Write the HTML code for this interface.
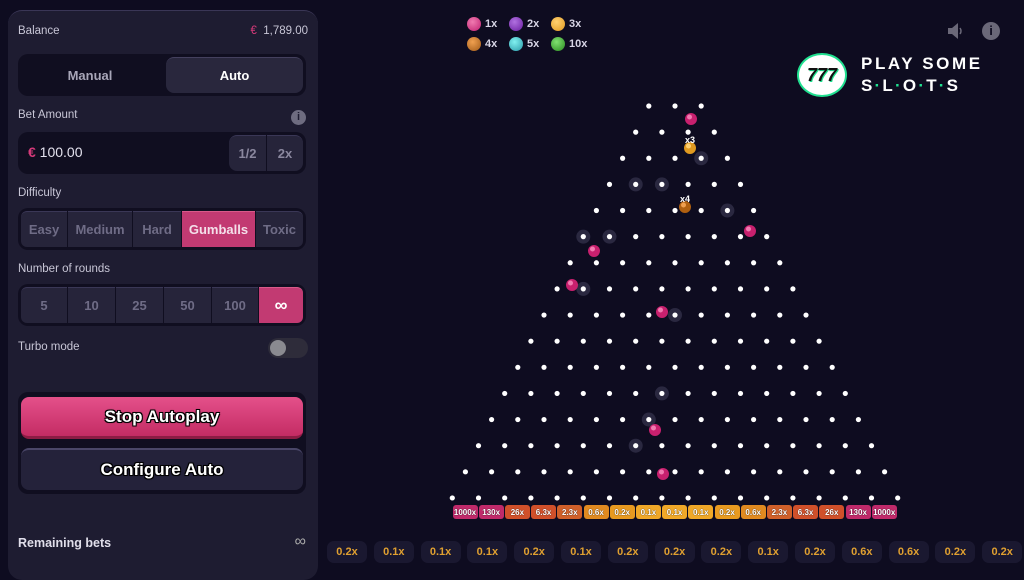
<!DOCTYPE html>
<html><head><meta charset="utf-8"><style>
*{box-sizing:border-box;margin:0;padding:0}
body{width:1024px;height:565px;overflow:hidden;background:#0e0c20;font-family:"Liberation Sans",sans-serif;color:#d8d6e6;position:relative}
.panel{position:absolute;left:8px;top:10px;width:310px;height:570px;background:#1e1c31;border-radius:14px;border-top:1px solid #3a3656}
.lbl{position:absolute;left:10px;font-size:11.5px;color:#c8c6d6}
.box{position:absolute;left:10px;width:288px;background:#100e20;border-radius:10px}
.seg{position:absolute;top:3px;bottom:3px;background:#26243a;border-top:1px solid #3a3756;display:flex;align-items:center;justify-content:center;font-weight:bold;color:#6f6c86;font-size:13px}
.btn{position:absolute;left:13px;width:282px;border-radius:8px;display:flex;align-items:center;justify-content:center;font-weight:bold;color:#fff;font-size:17px;text-shadow:0 0 2px #000,1px 1px 0 #000,-1px -1px 0 #000,1px -1px 0 #000,-1px 1px 0 #000}
.leg{position:absolute;font-size:11px;font-weight:bold;color:#d8d6e6}
.ball{position:absolute;width:14px;height:14px;border-radius:50%}
.pill{position:absolute;top:541px;width:40px;height:22px;background:#1a1830;border-radius:7px;color:#e0a030;font-weight:bold;font-size:11px;display:flex;align-items:center;justify-content:center}
.mb{position:absolute;top:505px;width:25px;height:14px;border-radius:3px;font-size:8px;font-weight:bold;color:#fff;display:flex;align-items:center;justify-content:center;text-shadow:0 0 1px #000}
</style></head><body>
<div class="panel">
 <div class="lbl" style="top:14px">Balance</div>
 <div class="lbl" style="top:14px;left:auto;right:10px"><span style="color:#d63a7a">€</span>&nbsp; 1,789.00</div>
 <div class="box" style="top:43px;height:42px">
  <div style="position:absolute;left:0;width:144px;top:0;bottom:0;display:flex;align-items:center;justify-content:center;font-weight:bold;font-size:13px;color:#a8a6b8">Manual</div>
  <div style="position:absolute;left:148px;right:3px;top:3px;bottom:3px;background:#29273d;border-top:1px solid #44405e;border-radius:8px;display:flex;align-items:center;justify-content:center;font-weight:bold;font-size:13px;color:#fff">Auto</div>
 </div>
 <div class="lbl" style="top:98px">Bet Amount</div>
 <div style="position:absolute;right:12px;top:99px;width:15px;height:15px;border-radius:50%;background:#6e6c80;color:#1e1c31;font-size:11px;font-weight:bold;text-align:center;line-height:15px">i</div>
 <div class="box" style="top:121px;height:42px">
  <div style="position:absolute;left:10px;top:12px;font-size:14px;color:#e4e2ee"><span style="color:#d63a7a;font-weight:bold">€</span> 100.00</div>
  <div class="seg" style="left:211px;width:37px;border-radius:8px 0 0 8px;color:#8a879e">1/2</div>
  <div class="seg" style="left:249px;width:36px;border-radius:0 8px 8px 0;color:#8a879e">2x</div>
 </div>
 <div class="lbl" style="top:176px">Difficulty</div>
 <div class="box" style="top:197px;height:42px">
  <div class="seg" style="left:3px;width:46px;border-radius:6px 0 0 6px">Easy</div>
  <div class="seg" style="left:50px;width:64px">Medium</div>
  <div class="seg" style="left:115px;width:48px">Hard</div>
  <div class="seg" style="left:164px;width:73px;background:#c23a72;border-color:#d85a8a;color:#f4e0ea">Gumballs</div>
  <div class="seg" style="left:238px;width:47px;border-radius:0 6px 6px 0">Toxic</div>
 </div>
 <div class="lbl" style="top:252px">Number of rounds</div>
 <div class="box" style="top:273px;height:42px">
  <div class="seg" style="left:3px;width:46px;border-radius:6px 0 0 6px">5</div>
  <div class="seg" style="left:50px;width:47px">10</div>
  <div class="seg" style="left:98px;width:47px">25</div>
  <div class="seg" style="left:146px;width:47px">50</div>
  <div class="seg" style="left:194px;width:46px">100</div>
  <div class="seg" style="left:241px;width:44px;border-radius:0 6px 6px 0;background:#c23a72;border-color:#d85a8a;color:#fff;font-size:18px">∞</div>
 </div>
 <div class="lbl" style="top:330px">Turbo mode</div>
 <div style="position:absolute;right:10px;top:327px;width:40px;height:20px;border-radius:10px;background:#2e2c3a"><div style="position:absolute;left:2px;top:2px;width:16px;height:16px;border-radius:50%;background:#8a8a90"></div></div>
 <div style="position:absolute;left:10px;top:381px;width:288px;height:102px;background:#100e20;border-radius:10px"></div>
 <div class="btn" style="top:386px;height:42px;background:linear-gradient(#e4508a,#c42c64);border-bottom:3px solid #8c1c44">Stop Autoplay</div>
 <div class="btn" style="top:437px;height:42px;background:#24223a;border-top:2px solid #4a4668">Configure Auto</div>
 <div class="lbl" style="top:525px;font-weight:bold;font-size:12.5px;color:#e0deea">Remaining bets</div>
 <div class="lbl" style="top:522px;left:auto;right:12px;font-size:16px;color:#aaa">∞</div>
</div>

<div class="ball" style="left:467px;top:17px;background:radial-gradient(circle at 40% 35%,#f07ab0,#c02070)"></div><div class="leg" style="left:485px;top:18px">1x</div>
<div class="ball" style="left:509px;top:17px;background:radial-gradient(circle at 40% 35%,#b070e0,#6a1ea0)"></div><div class="leg" style="left:527px;top:18px">2x</div>
<div class="ball" style="left:551px;top:17px;background:radial-gradient(circle at 40% 35%,#ffd070,#e09a20)"></div><div class="leg" style="left:569px;top:18px">3x</div>
<div class="ball" style="left:467px;top:37px;background:radial-gradient(circle at 40% 35%,#f0a050,#a05a18)"></div><div class="leg" style="left:485px;top:38px">4x</div>
<div class="ball" style="left:509px;top:37px;background:radial-gradient(circle at 40% 35%,#80f0f0,#2a9aa8)"></div><div class="leg" style="left:527px;top:38px">5x</div>
<div class="ball" style="left:551px;top:37px;background:radial-gradient(circle at 40% 35%,#80e070,#2a8a20)"></div><div class="leg" style="left:569px;top:38px">10x</div>

<svg style="position:absolute;left:946px;top:22px" width="20" height="18" viewBox="0 0 20 18"><path d="M2 6h4l6-5v16l-6-5H2z" fill="#6a6878"/><path d="M14 6q2 3 0 6" stroke="#6a6878" stroke-width="1.5" fill="none"/></svg>
<div style="position:absolute;left:982px;top:22px;width:18px;height:18px;border-radius:50%;background:#6a6878;color:#0e0c20;font-weight:bold;font-size:13px;text-align:center;line-height:18px">i</div>
<div style="position:absolute;left:797px;top:53px;width:50px;height:44px;border-radius:50%;background:#fff;border:2px solid #20e090;display:flex;align-items:center;justify-content:center;font-weight:bold;font-style:italic;font-size:18px;color:#111;text-shadow:1px 1px 0 #20e090">777</div>
<div style="position:absolute;left:861px;top:54px;font-weight:bold;font-size:17px;letter-spacing:2.6px;color:#fff">PLAY SOME</div>
<div style="position:absolute;left:861px;top:76px;font-weight:bold;font-size:17px;letter-spacing:2.2px;color:#fff">S<span style="color:#20e090">·</span>L<span style="color:#20e090">·</span>O<span style="color:#20e090">·</span>T<span style="color:#20e090">·</span>S</div>

<svg id="b" style="position:absolute;left:0;top:0" width="1024" height="565"></svg>
<div id="m"></div>
<div id="p"></div>
<script>
var s='',cx=675,dx=26.2,dy=26.13;
var hl={"2,3":1,"3,1":1,"3,2":1,"4,5":1,"5,0":1,"5,1":1,"7,1":1,"8,5":1,"11,6":1,"12,6":1,"13,6":1};
for(var r=0;r<16;r++){var n=r+3,y=106+r*dy;for(var i=0;i<n;i++){var x=cx+(i-(n-1)/2)*dx;if(hl[r+","+i])s+='<circle cx="'+x+'" cy="'+y+'" r="7" fill="#2a2840"/>';s+='<circle cx="'+x+'" cy="'+y+'" r="2.6" fill="#fff"/>';}}
function B(x,y,c1,c2){s+='<circle cx="'+x+'" cy="'+y+'" r="6" fill="'+c2+'"/><circle cx="'+(x-1.5)+'" cy="'+(y-2)+'" r="2.5" fill="'+c1+'"/>';}
var pk=['#f07ab0','#c8206e'];
B(691,119,pk[0],pk[1]);B(690,148,'#ffd070','#e09a20');B(685,207,'#f0a050','#b06010');B(750,231,pk[0],pk[1]);B(594,251,pk[0],pk[1]);B(572,285,pk[0],pk[1]);B(662,312,pk[0],pk[1]);B(655,430,pk[0],pk[1]);B(663,474,pk[0],pk[1]);
s+='<text x="690" y="143" fill="#fff" font-size="9" font-weight="bold" text-anchor="middle" font-family="Liberation Sans">x3</text><text x="685" y="202" fill="#fff" font-size="9" font-weight="bold" text-anchor="middle" font-family="Liberation Sans">x4</text>';
document.getElementById('b').innerHTML=s;
var mv=['1000x','130x','26x','6.3x','2.3x','0.6x','0.2x','0.1x','0.1x','0.1x','0.2x','0.6x','2.3x','6.3x','26x','130x','1000x'];
var mc=['#c02a6a','#c02a6a','#d0502a','#d0502a','#d0602a','#e08a20','#e89a20','#f0a828','#f0a828','#f0a828','#e89a20','#e08a20','#d0602a','#d0502a','#d0502a','#c02a6a','#c02a6a'];
var h='';for(var k=0;k<17;k++){h+='<div class="mb" style="left:'+(452.5+k*26.2)+'px;background:'+mc[k]+'">'+mv[k]+'</div>';}
document.getElementById('m').innerHTML=h;
var pv=['0.2x','0.1x','0.1x','0.1x','0.2x','0.1x','0.2x','0.2x','0.2x','0.1x','0.2x','0.6x','0.6x','0.2x','0.2x'];
h='';for(k=0;k<15;k++){h+='<div class="pill" style="left:'+(327+k*46.8)+'px">'+pv[k]+'</div>';}
document.getElementById('p').innerHTML=h;
</script>
</body></html>
